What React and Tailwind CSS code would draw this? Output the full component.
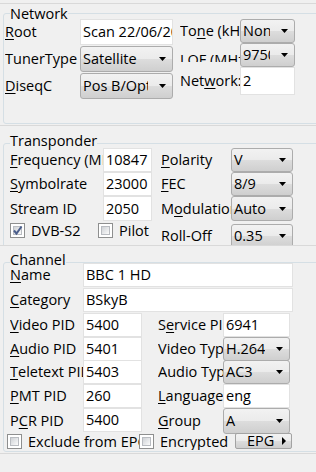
import React from 'react'

const Arrow = () => (
  <svg width="7" height="4" viewBox="0 0 7 4"><path d="M0 0H7L3.5 4Z" fill="#000" /></svg>
)

const U = ({ children }) => (
  <span className="underline decoration-1 underline-offset-[2px]">{children}</span>
)

function Label({ w, className = '', children }) {
  return (
    <div className={`${w} shrink-0 flex items-center overflow-hidden whitespace-nowrap leading-[16px] ${className}`}>
      {children}
    </div>
  )
}

function TextBox({ w, h = 'h-full', children }) {
  return (
    <div className={`${w} ${h} shrink-0 bg-white border border-[#e2e2e2] flex items-center pl-[2px] overflow-hidden whitespace-nowrap leading-[16px]`}>
      {children}
    </div>
  )
}

function Combo({ w, h = 'h-full', className = '', children }) {
  return (
    <div className={`${w} ${h} shrink-0 flex items-center rounded-[3px] border border-[#acacac] bg-[linear-gradient(to_bottom,#f2f2f2_0%,#ebebeb_50%,#dddddd_50%,#cfcfcf_100%)] leading-[16px] ${className}`}>
      <div className="flex-1 min-w-0 overflow-hidden whitespace-nowrap pl-[2px]">{children}</div>
      <div className="w-[24px] shrink-0 flex justify-end pr-[6px]"><Arrow /></div>
    </div>
  )
}

function Check({ checked, w, children }) {
  return (
    <div className={`${w} shrink-0 flex items-start overflow-hidden whitespace-nowrap`}>
      <div className="w-[15px] h-[15px] shrink-0 border border-[#8e8f8f] bg-white p-[2px] relative">
        <div className="h-full w-full border border-[#b9bcc1] bg-linear-to-br from-[#cfd2d6] to-[#fbfbfb]" />
        {checked && (
          <svg className="absolute left-[1px] top-[1px]" width="11" height="11" viewBox="0 0 11 11">
            <path d="M2 5.5L4.5 8.5L9.5 1.5" fill="none" stroke="#4b5e8c" strokeWidth="2" />
          </svg>
        )}
      </div>
      <span className="ml-[6px] leading-[16px]">{children}</span>
    </div>
  )
}

function Group({ title, className, titleTop, children }) {
  return (
    <div className={`relative ml-[3px] w-[340px] shrink-0 border border-[#d5dfe5] rounded-[3px] ${className}`}>
      <div className={`absolute left-[6px] ${titleTop} bg-[#f0f0f0] leading-[16px] whitespace-nowrap`}>{title}</div>
      {children}
    </div>
  )
}

const Sep = () => <div className="h-px shrink-0 bg-[#d9d9d9]" />

export default function App() {
  return (
    <div className="w-[316px] h-[472px] overflow-hidden bg-[#f0f0f0] text-black text-[14.5px] font-['Open_Sans',sans-serif] flex flex-col">
      <div className="h-[3px] shrink-0" />
      <Sep />

      <div className="h-[121px] shrink-0 overflow-hidden">
        <Group title="Network" className="mt-[9px] h-[111px]" titleTop="-top-[8px]">
          <div className="flex pt-[5px] pl-[1px]">
            <div className="flex flex-col gap-[1px]">
              <div className="flex h-[26px]">
                <Label w="w-[75px]"><U>R</U>oot</Label>
                <TextBox w="w-[93px]">Scan 22/06/2016</TextBox>
              </div>
              <div className="flex h-[26px]">
                <Label w="w-[75px]">TunerType</Label>
                <Combo w="w-[93px]">Satellite</Combo>
              </div>
              <div className="flex h-[26px]">
                <Label w="w-[75px]"><U>D</U>iseqC</Label>
                <Combo w="w-[93px]">Pos B/Opt A</Combo>
              </div>
            </div>
            <div className="ml-[7px] flex flex-col">
              <div className="flex h-[24px]">
                <Label w="w-[60px]">To<U>n</U>e (kHz)</Label>
                <Combo w="w-[55px]">None</Combo>
              </div>
              <div className="flex h-[24px]">
                <div className="w-[60px] h-[19px] shrink-0 overflow-hidden pt-[9px] leading-[16px] whitespace-nowrap">LOF (MHz)</div>
                <Combo w="w-[55px]">9750</Combo>
              </div>
              <div className="flex h-[28px]">
                <Label w="w-[60px]">Net<U>w</U>ork:</Label>
                <TextBox w="w-[55px]">2</TextBox>
              </div>
            </div>
          </div>
        </Group>
      </div>
      <Sep />

      <div className="h-[119px] shrink-0 overflow-hidden">
        <Group title="Transponder" className="mt-[17px] h-[115px]" titleTop="-top-[11px]">
          <div className="flex flex-col pt-[4px] pl-[6px]">
            <div className="flex h-[24px]">
              <Label w="w-[93px]"><U>F</U>requency (MHz)</Label>
              <TextBox w="w-[49px]">10847</TextBox>
              <Label w="w-[70px]" className="ml-[9px]"><U>P</U>olarity</Label>
              <Combo w="w-[62px]">V</Combo>
            </div>
            <div className="flex h-[24px]">
              <Label w="w-[93px]"><U>S</U>ymbolrate</Label>
              <TextBox w="w-[49px]">23000</TextBox>
              <Label w="w-[70px]" className="ml-[9px]"><U>F</U>EC</Label>
              <Combo w="w-[62px]">8/9</Combo>
            </div>
            <div className="flex h-[25px]">
              <Label w="w-[93px]">Stream ID</Label>
              <TextBox w="w-[49px]">2050</TextBox>
              <Label w="w-[70px]" className="ml-[9px]">M<U>o</U>dulation</Label>
              <Combo w="w-[62px]">Auto</Combo>
            </div>
            <div className="flex h-[27px]">
              <div className="w-[142px] shrink-0 flex pt-[2px]">
                <Check checked w="w-[88px]">DVB-S2</Check>
                <Check w="w-[54px]">Pilot</Check>
              </div>
              <Label w="w-[70px]" className="ml-[9px] pt-[3px]">Roll-Off</Label>
              <div className="pt-[3px]">
                <Combo w="w-[62px]" h="h-[24px]">0.35</Combo>
              </div>
            </div>
          </div>
        </Group>
      </div>
      <Sep />

      <div className="h-[207px] shrink-0 overflow-hidden">
        <Group title="Channel" className="mt-[16px] h-[190px]" titleTop="-top-[11px]">
          <div className="flex flex-col pl-[6px]">
            <div className="flex h-[25px] items-start">
              <Label w="w-[73px] h-[24px]"><U>N</U>ame</Label>
              <TextBox w="w-[210px]" h="h-[24px]">BBC 1 HD</TextBox>
            </div>
            <div className="flex h-[25px] items-start">
              <Label w="w-[73px] h-[24px]"><U>C</U>ategory</Label>
              <TextBox w="w-[210px]" h="h-[24px]">BSkyB</TextBox>
            </div>
            <div className="flex h-[24px] items-start">
              <Label w="w-[73px] h-[24px]"><U>V</U>ideo PID</Label>
              <TextBox w="w-[59px]" h="h-[24px]">5400</TextBox>
              <Label w="w-[65px] h-[24px]" className="ml-[16px]">S<U>e</U>rvice PID</Label>
              <TextBox w="w-[67px]" h="h-[24px]">6941</TextBox>
            </div>
            <div className="flex h-[23px] items-start">
              <Label w="w-[73px] h-[24px]"><U>A</U>udio PID</Label>
              <TextBox w="w-[59px]" h="h-[24px]">5401</TextBox>
              <Label w="w-[65px] h-[24px]" className="ml-[16px]">Video Type</Label>
              <Combo w="w-[67px]" h="h-[24px]">H.264</Combo>
            </div>
            <div className="flex h-[24px] items-start">
              <Label w="w-[73px] h-[24px]"><U>T</U>eletext PID</Label>
              <TextBox w="w-[59px]" h="h-[24px]">5403</TextBox>
              <Label w="w-[65px] h-[24px]" className="ml-[16px]">Audio Type</Label>
              <Combo w="w-[67px]" h="h-[24px]">AC3</Combo>
            </div>
            <div className="flex h-[24px] items-start">
              <Label w="w-[73px] h-[24px]"><U>P</U>MT PID</Label>
              <TextBox w="w-[59px]" h="h-[24px]">260</TextBox>
              <Label w="w-[65px] h-[24px]" className="ml-[16px]"><U>L</U>anguage</Label>
              <TextBox w="w-[67px]" h="h-[24px]">eng</TextBox>
            </div>
            <div className="flex h-[25px] items-start">
              <Label w="w-[73px] h-[25px]">P<U>C</U>R PID</Label>
              <TextBox w="w-[59px]" h="h-[24px]">5400</TextBox>
              <Label w="w-[65px] h-[25px]" className="ml-[16px]"><U>G</U>roup</Label>
              <Combo w="w-[67px]" h="h-[26px]">A</Combo>
            </div>
            <div className="flex h-[19px] items-start -ml-[3px]">
              <div className="pt-[1px] flex">
                <Check w="w-[132px]">Exclude from EPG</Check>
                <Check w="w-[96px]">Encrypted</Check>
              </div>
              <div className="w-[57px] h-[16px] shrink-0 flex items-center rounded-[2px] border border-[#a3a3a3] bg-[linear-gradient(to_bottom,#f2f2f2_0%,#ebebeb_50%,#dddddd_50%,#cfcfcf_100%)] pl-[11px] pr-[5px] leading-[16px]">
                <span>EPG</span>
                <svg className="ml-auto" width="4" height="8" viewBox="0 0 4 8"><path d="M0 0L4 4L0 8Z" fill="#000" /></svg>
              </div>
            </div>
          </div>
        </Group>
      </div>
      <Sep />
    </div>
  )
}
